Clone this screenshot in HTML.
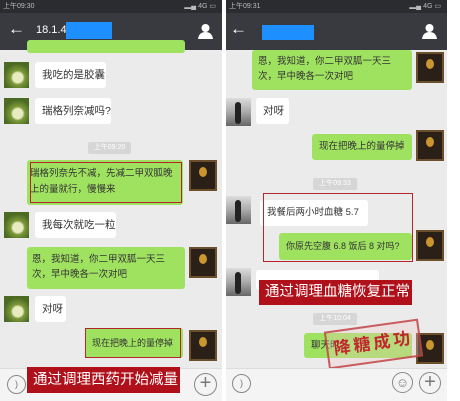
<!DOCTYPE html>
<html><head><meta charset="utf-8"><style>
*{margin:0;padding:0;box-sizing:border-box}
body{width:460px;height:401px;background:#fff;position:relative;overflow:hidden;font-family:"Liberation Sans","Noto Sans CJK SC",sans-serif}
.a{position:absolute}
.panel{position:absolute;top:0;height:401px;background:#ebebeb;overflow:hidden}
.sb{position:absolute;left:0;right:0;top:0;height:13px;background:#2a2c30;color:#bbb;font-size:7px;line-height:13px;padding-left:3px}
.hd{position:absolute;left:0;right:0;top:13px;height:37px;background:#393a3f;color:#fff}
.bar{position:absolute;left:0;right:0;bottom:0;height:33px;background:#f4f4f4;border-top:1px solid #ddd}
.w{position:absolute;background:#fff;border-radius:3px;font-size:10.5px;color:#333;line-height:26px;padding-left:7px;white-space:nowrap}
.g{position:absolute;background:#9fe260;border-radius:3px;font-size:10px;color:#333;padding:4px 6px;line-height:15px}
.nw{white-space:nowrap;font-size:9.5px;padding:0 0 0 7px}
.av1{position:absolute;width:25px;height:26px;background:radial-gradient(circle at 55% 60%,#e8ebc0 0 5px,#7d9a3a 7px,#4b6a22 14px)}
.av2{position:absolute;width:28px;height:31px;background:#2a2017;border:2px solid #6a4f2a}
.av2:after{content:"";position:absolute;left:8px;top:5px;width:8px;height:10px;border-radius:50%;background:#c9962f}
.av3{position:absolute;width:25px;height:28px;background:linear-gradient(#ddd,#aaa 50%,#666)}
.av3:after{content:"";position:absolute;left:9px;top:4px;width:6px;height:22px;background:#222;border-radius:3px}
.t{position:absolute;background:#d6d6d6;color:#fff;font-size:7px;text-align:center;line-height:12px;border-radius:2px}
.red{position:absolute;border:1.5px solid #b3262a}
.ban{position:absolute;background:#b0101a;color:#fff;font-size:14.5px;line-height:26px;padding-left:6px;white-space:nowrap;overflow:hidden}
.circ{position:absolute;border:1.2px solid #888;border-radius:50%;color:#777;text-align:center}
</style></head><body>

<div class="panel" style="left:0;width:222px">
<div class="sb">上午09:30<span style="position:absolute;right:6px">▂▄ 4G ▭</span></div>
<div class="hd"><span class="a" style="left:8px;top:6px;font-size:17px">←</span><span class="a" style="left:36px;top:11px;font-size:11px">18.1.4</span><span class="a" style="left:66px;top:9px;width:46px;height:17px;background:#1e8fff"></span>
<svg class="a" style="left:198px;top:10px" width="15" height="16"><circle cx="7.5" cy="5" r="4" fill="#fff"/><path d="M0 16 Q1 9 7.5 9 Q14 9 15 16Z" fill="#fff"/></svg></div>
<div class="g" style="left:27px;top:40px;width:158px;height:13px;padding:0"></div>
<div class="av1" style="left:4px;top:62px"></div><div class="w" style="left:35px;top:62px;width:71px">我吃的是胶囊</div>
<div class="av1" style="left:4px;top:98px"></div><div class="w" style="left:35px;top:98px;width:76px">瑞格列奈减吗?</div>
<div class="t" style="left:88px;top:142px;width:43px">上午09:20</div>
<div class="g" style="left:27px;top:160px;width:156px;height:45px;padding:6px 3px;font-size:9.5px;line-height:16px">瑞格列奈先不减，先减二甲双胍晚上的量就行，慢慢来</div>
<div class="red" style="left:30px;top:162px;width:152px;height:41px"></div>
<div class="av2" style="left:189px;top:160px"></div>
<div class="av1" style="left:4px;top:212px"></div><div class="w" style="left:35px;top:212px;width:81px">我每次就吃一粒</div>
<div class="g" style="left:27px;top:247px;width:158px;height:42px;font-size:9.5px;padding:5px 5px">恩，我知道，你二甲双胍一天三次，早中晚各一次对吧</div>
<div class="av2" style="left:189px;top:247px"></div>
<div class="av1" style="left:4px;top:296px"></div><div class="w" style="left:35px;top:296px;width:31px">对呀</div>
<div class="g nw" style="left:85px;top:328px;width:98px;height:30px;line-height:30px;font-size:9px;padding-left:7px">现在把晚上的量停掉</div>
<div class="red" style="left:85px;top:328px;width:96px;height:30px"></div>
<div class="av2" style="left:189px;top:330px"></div>
<div class="bar"></div>
<div class="circ" style="left:7px;top:375px;width:19px;height:19px;font-size:9px;line-height:17px">)</div>
<div class="circ" style="left:194px;top:373px;width:23px;height:23px;font-size:20px;line-height:19px">+</div>
<div class="ban" style="left:27px;top:367px;width:153px">通过调理西药开始减量</div>
</div>

<div class="panel" style="left:226px;width:221px">
<div class="sb">上午09:31<span style="position:absolute;right:6px">▂▄ 4G ▭</span></div>
<div class="hd"><span class="a" style="left:4px;top:6px;font-size:17px">←</span><span class="a" style="left:36px;top:12px;width:52px;height:15px;background:#1e8fff"></span>
<svg class="a" style="left:196px;top:10px" width="15" height="16"><circle cx="7.5" cy="5" r="4" fill="#fff"/><path d="M0 16 Q1 9 7.5 9 Q14 9 15 16Z" fill="#fff"/></svg></div>
<div class="g" style="left:26px;top:50px;width:160px;height:40px;font-size:9.5px;padding:4px 6px">恩，我知道，你二甲双胍一天三次，早中晚各一次对吧</div>
<div class="av2" style="left:190px;top:52px"></div>
<div class="av3" style="left:0;top:98px"></div><div class="w" style="left:30px;top:98px;width:33px">对呀</div>
<div class="g nw" style="left:86px;top:134px;width:100px;height:26px;line-height:26px">现在把晚上的量停掉</div>
<div class="av2" style="left:190px;top:130px"></div>
<div class="t" style="left:87px;top:178px;width:44px">上午09:33</div>
<div class="av3" style="left:0;top:196px"></div><div class="w" style="left:34px;top:200px;width:108px;font-size:9.5px">我餐后两小时血糖 5.7</div>
<div class="g nw" style="left:53px;top:233px;width:133px;height:27px;line-height:27px;font-size:9px">你原先空腹 6.8 饭后 8 对吗?</div>
<div class="red" style="left:37px;top:193px;width:150px;height:69px"></div>
<div class="av2" style="left:190px;top:230px"></div>
<div class="av3" style="left:0;top:268px"></div><div class="w" style="left:30px;top:270px;width:123px;height:20px"></div>
<div class="ban" style="left:33px;top:280px;width:153px;height:25px;line-height:25px">通过调理血糖恢复正常</div>
<div class="t" style="left:87px;top:313px;width:44px">上午10:04</div>
<div class="g nw" style="left:78px;top:333px;width:108px;height:25px;line-height:25px">聊天时</div>
<div class="av2" style="left:190px;top:333px"></div>
<div class="a" style="left:100px;top:325px;width:95px;height:38px;border:2px solid rgba(192,57,61,.8);transform:rotate(-8deg);color:#c0282d;font-size:17px;font-weight:bold;text-align:center;line-height:34px;letter-spacing:3px;background:rgba(240,200,200,.3)">降糖成功</div>
<div class="bar"></div>
<div class="circ" style="left:6px;top:374px;width:19px;height:19px;font-size:9px;line-height:17px">)</div>
<div class="circ" style="left:166px;top:372px;width:21px;height:21px;font-size:13px;line-height:19px">☺</div>
<div class="circ" style="left:193px;top:372px;width:22px;height:22px;font-size:20px;line-height:18px">+</div>
</div>
</body></html>
